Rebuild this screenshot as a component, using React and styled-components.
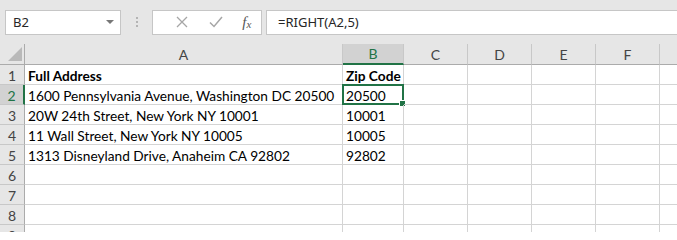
import React from "react";
import styled, {createGlobalStyle} from "styled-components";

const COLUMNS = [
    {key: "A", width: 318},
    {key: "B", width: 61},
    {key: "C", width: 64},
    {key: "D", width: 64},
    {key: "E", width: 64},
    {key: "F", width: 64},
    {key: "G", width: 64},
];

const ROWS = [
    ["Full Address", "Zip Code"],
    ["1600 Pennsylvania Avenue, Washington DC 20500", "20500"],
    ["20W 24th Street, New York NY 10001", "10001"],
    ["11 Wall Street, New York NY 10005", "10005"],
    ["1313 Disneyland Drive, Anaheim CA 92802", "92802"],
    [],
    [],
    [],
    [],
];

const SELECTED = {row: 2, col: "B"};
const GREEN = "#217346";

const GlobalStyle = createGlobalStyle`
  html, body {
    margin: 0;
    padding: 0;
    background: #ffffff;
    overflow: hidden;
  }
  body {
    width: 677px;
    height: 232px;
  }
`;

const App = () => {
    return (
        <>
            <GlobalStyle/>
            <Page>
                <Toolbar>
                    <NameBox>
                        <span>B2</span>
                        <DropArrow/>
                    </NameBox>
                    <Grip>
                        <i/><i/><i/>
                    </Grip>
                    <FormulaButtons>
                        <IconButton>
                            <svg width="12" height="12" viewBox="0 0 12 12">
                                <path d="M1 1 L11 11 M11 1 L1 11" stroke="#a6a6a6" strokeWidth="1.3" fill="none"/>
                            </svg>
                        </IconButton>
                        <IconButton>
                            <svg width="14" height="12" viewBox="0 0 14 12">
                                <path d="M1 6.5 L5 10.5 L13 1" stroke="#a6a6a6" strokeWidth="1.5" fill="none"/>
                            </svg>
                        </IconButton>
                        <Fx>f<sub>x</sub></Fx>
                    </FormulaButtons>
                    <FormulaInput>=RIGHT(A2,5)</FormulaInput>
                </Toolbar>
                <Sheet>
                    <HeaderRow>
                        <Corner>
                            <svg width="14" height="14" viewBox="0 0 14 14">
                                <path d="M14 0 L14 14 L0 14 Z" fill="#b9b9b9"/>
                            </svg>
                        </Corner>
                        {COLUMNS.map((col) => (
                            <ColHeader
                                key={col.key}
                                $width={col.width}
                                $active={col.key === SELECTED.col}
                            >
                                {col.key}
                            </ColHeader>
                        ))}
                    </HeaderRow>
                    {ROWS.map((cells, rowIndex) => {
                        const rowNum = rowIndex + 1;
                        return (
                            <Row key={"row-" + rowNum}>
                                <RowHeader $active={rowNum === SELECTED.row}>{rowNum}</RowHeader>
                                {COLUMNS.map((col, colIndex) => (
                                    <Cell
                                        key={col.key + rowNum}
                                        $width={col.width}
                                        $bold={rowNum === 1}
                                    >
                                        {cells[colIndex]}
                                        {rowNum === SELECTED.row && col.key === SELECTED.col && (
                                            <Selection>
                                                <FillHandle/>
                                            </Selection>
                                        )}
                                    </Cell>
                                ))}
                            </Row>
                        );
                    })}
                </Sheet>
            </Page>
        </>
    );
};

const Page = styled.div`
  width: 677px;
  height: 232px;
  overflow: hidden;
  background: #ffffff;
`;

const Toolbar = styled.div`
  display: flex;
  align-items: center;
  height: 44px;
  padding: 0 0 0 5px;
  background: #e6e6e6;
  box-sizing: border-box;
  font-family: "Noto Sans", "Open Sans", sans-serif;
  font-size: 13px;
  color: #262626;
`;

const NameBox = styled.div`
  display: flex;
  align-items: center;
  justify-content: space-between;
  width: 116px;
  height: 25px;
  padding: 0 6px 0 7px;
  box-sizing: border-box;
  background: #ffffff;
  border: 1px solid #c6c6c6;
`;

const DropArrow = styled.span`
  width: 0;
  height: 0;
  border-left: 4px solid transparent;
  border-right: 4px solid transparent;
  border-top: 4px solid #777777;
`;

const Grip = styled.div`
  display: flex;
  flex-direction: column;
  gap: 2px;
  width: 31px;
  align-items: center;

  i {
    display: block;
    width: 2px;
    height: 2px;
    background: #b4b4b4;
  }
`;

const FormulaButtons = styled.div`
  display: flex;
  align-items: center;
  width: 110px;
  height: 25px;
  box-sizing: border-box;
  background: #ffffff;
  border: 1px solid #c6c6c6;
  padding-left: 12px;
`;

const IconButton = styled.span`
  display: flex;
  align-items: center;
  justify-content: center;
  width: 36px;
  height: 100%;
`;

const Fx = styled.span`
  width: 30px;
  text-align: center;
  font-family: "Liberation Serif", serif;
  font-style: italic;
  font-size: 15px;
  color: #555555;

  sub {
    font-size: 11px;
    vertical-align: -1px;
  }
`;

const FormulaInput = styled.div`
  flex: 1;
  display: flex;
  align-items: center;
  height: 25px;
  margin-left: 4px;
  padding-left: 11px;
  box-sizing: border-box;
  background: #ffffff;
  border: 1px solid #c6c6c6;
  border-right: none;
`;

const Sheet = styled.div`
  display: flex;
  flex-direction: column;
  font-family: "Lato", "Liberation Sans", sans-serif;
  font-size: 13.7px;
  color: #000000;
`;

const HeaderRow = styled.div`
  display: flex;
  height: 21px;
  background: #e6e6e6;
`;

const Corner = styled.div`
  display: flex;
  align-items: flex-end;
  justify-content: flex-end;
  flex: 0 0 25px;
  padding: 0 2px 3px 0;
  box-sizing: border-box;
  border-right: 1px solid #ababab;
  border-bottom: 1px solid #ababab;
`;

const ColHeader = styled.div`
  flex: 0 0 ${(p) => p.$width}px;
  min-width: 0;
  display: flex;
  align-items: center;
  justify-content: center;
  box-sizing: border-box;
  font-size: 14px;
  color: ${(p) => (p.$active ? GREEN : "#444444")};
  background: ${(p) => (p.$active ? "#d2d2d2" : "#e6e6e6")};
  border-right: 1px solid #c8c8c8;
  border-bottom: ${(p) => (p.$active ? `2px solid ${GREEN}` : "1px solid #ababab")};
`;

const Row = styled.div`
  display: flex;
  height: 20px;
`;

const RowHeader = styled.div`
  flex: 0 0 25px;
  display: flex;
  align-items: center;
  justify-content: center;
  box-sizing: border-box;
  font-size: 14px;
  padding-top: 1px;
  color: ${(p) => (p.$active ? GREEN : "#444444")};
  background: ${(p) => (p.$active ? "#d2d2d2" : "#e6e6e6")};
  border-bottom: 1px solid #c8c8c8;
  border-right: ${(p) => (p.$active ? `2px solid ${GREEN}` : "1px solid #ababab")};
`;

const Cell = styled.div`
  position: relative;
  flex: 0 0 ${(p) => p.$width}px;
  min-width: 0;
  display: flex;
  align-items: center;
  padding: 1px 0 0 3px;
  box-sizing: border-box;
  white-space: nowrap;
  font-weight: ${(p) => (p.$bold ? 700 : 400)};
  border-right: 1px solid #d4d4d4;
  border-bottom: 1px solid #d4d4d4;
`;

const Selection = styled.div`
  position: absolute;
  left: -1px;
  top: -1px;
  right: -1px;
  bottom: -1px;
  border: 2px solid ${GREEN};
  pointer-events: none;
`;

const FillHandle = styled.span`
  position: absolute;
  right: -4px;
  bottom: -4px;
  width: 5px;
  height: 5px;
  background: ${GREEN};
  border: 1px solid #ffffff;
`;

export default App;
